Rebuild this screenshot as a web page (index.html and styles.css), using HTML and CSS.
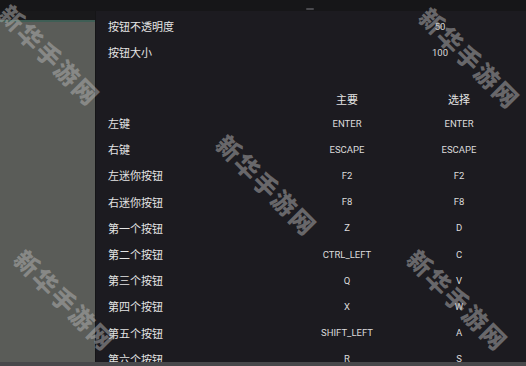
FILE: index.html
```html
<!DOCTYPE html>
<html lang="zh">
<head>
<meta charset="utf-8">
<link rel="stylesheet" href="styles.css">
</head>
<body>
<div class="screen">
  <div class="topbar"><span class="dot"></span></div>
  <div class="middle">
    <div class="side">
      <div class="side-top"></div>
      <div class="side-panel"></div>
    </div>
    <div class="dialog">
      <div class="setting"><span class="label">按钮不透明度</span><span class="val">50</span></div>
      <div class="setting"><span class="label">按钮大小</span><span class="val">100</span></div>
      <div class="keys head"><span></span><span class="c">主要</span><span class="c">选择</span></div>
      <div class="keys"><span class="label">左键</span><span class="k">ENTER</span><span class="k">ENTER</span></div>
      <div class="keys"><span class="label">右键</span><span class="k">ESCAPE</span><span class="k">ESCAPE</span></div>
      <div class="keys"><span class="label">左迷你按钮</span><span class="k">F2</span><span class="k">F2</span></div>
      <div class="keys"><span class="label">右迷你按钮</span><span class="k">F8</span><span class="k">F8</span></div>
      <div class="keys"><span class="label">第一个按钮</span><span class="k">Z</span><span class="k">D</span></div>
      <div class="keys"><span class="label">第二个按钮</span><span class="k">CTRL_LEFT</span><span class="k">C</span></div>
      <div class="keys"><span class="label">第三个按钮</span><span class="k">Q</span><span class="k">V</span></div>
      <div class="keys"><span class="label">第四个按钮</span><span class="k">X</span><span class="k">W</span></div>
      <div class="keys"><span class="label">第五个按钮</span><span class="k">SHIFT_LEFT</span><span class="k">A</span></div>
      <div class="keys"><span class="label">第六个按钮</span><span class="k">R</span><span class="k">S</span></div>
    </div>
  </div>
  <div class="bottombar"></div>
  <div class="wm wm-tl">新华手游网</div>
  <div class="wm wm-c">新华手游网</div>
  <div class="wm wm-tr">新华手游网</div>
  <div class="wm wm-bl">新华手游网</div>
  <div class="wm wm-br">新华手游网</div>
</div>
</body>
</html>
```
FILE: styles.css
```css
html, body {
  margin: 0;
  padding: 0;
  background: #1c1b20;
}
.screen {
  position: relative;
  width: 526px;
  height: 366px;
  overflow: hidden;
  display: flex;
  flex-direction: column;
  font-family: Roboto, "Noto Sans CJK SC", sans-serif;
}
.topbar {
  height: 11px;
  background: #161618;
  flex: none;
  display: flex;
  justify-content: center;
}
.dot {
  width: 8px;
  height: 2px;
  margin-top: 8px;
  margin-left: 94px;
  background: #4a4a4e;
  border-radius: 1px;
}
.middle {
  flex: 1;
  display: flex;
  min-height: 0;
}
.side {
  width: 95px;
  flex: none;
  display: flex;
  flex-direction: column;
  border-right: 1px solid #151517;
}
.side-top {
  height: 9px;
  background: #19191b;
}
.side-panel {
  flex: 1;
  background: #5a5c58;
  border-top: 2px solid #3f5e55;
}
.dialog {
  flex: 1;
  background: #1c1b20;
  padding-top: 2px;
  overflow: hidden;
}
.setting {
  height: 26px;
  display: grid;
  grid-template-columns: 287px 114px;
  align-items: center;
}
.label {
  padding-left: 12px;
  font-family: "Noto Sans CJK SC", sans-serif;
  font-size: 11px;
  color: #e4e4e4;
  white-space: nowrap;
}
.val {
  text-align: center;
  font-size: 9.5px;
  color: #d8d8d8;
}
.keys {
  height: 26.2px;
  display: grid;
  grid-template-columns: 195px 112px 112px;
  align-items: center;
}
.keys.head {
  margin-top: 23px;
  height: 22px;
}
.c {
  text-align: center;
  font-family: "Noto Sans CJK SC", sans-serif;
  font-size: 11px;
  color: #e4e4e4;
}
.k {
  text-align: center;
  font-size: 9.5px;
  color: #dcdcdc;
  white-space: nowrap;
}
.bottombar {
  height: 4px;
  flex: none;
  background: #48484b;
}
.wm {
  position: absolute;
  width: 150px;
  height: 30px;
  line-height: 30px;
  text-align: center;
  font-family: "Noto Sans CJK SC", sans-serif;
  font-weight: 900;
  font-size: 24px;
  letter-spacing: 2px;
  color: rgba(180, 180, 180, 0.5);
  transform: rotate(45deg);
  white-space: nowrap;
}
.wm-tl { left: -25px; top: 40px; }
.wm-c { left: 192px; top: 170px; }
.wm-tr { left: 395px; top: 43px; }
.wm-bl { left: -10px; top: 285px; }
.wm-br { left: 383px; top: 285px; }
```
